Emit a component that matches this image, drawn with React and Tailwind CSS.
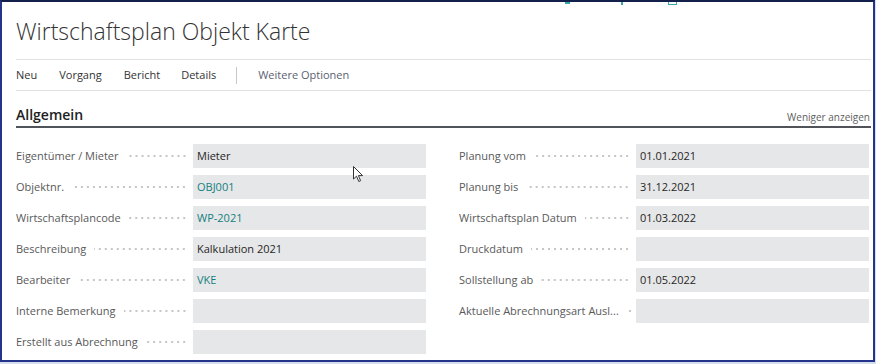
import React from 'react';

const leftFields = [
    { label: 'Eigentümer / Mieter', value: 'Mieter' },
    { label: 'Objektnr.', value: 'OBJ001', link: true },
    { label: 'Wirtschaftsplancode', value: 'WP-2021', link: true },
    { label: 'Beschreibung', value: 'Kalkulation 2021' },
    { label: 'Bearbeiter', value: 'VKE', link: true },
    { label: 'Interne Bemerkung', value: '' },
    { label: 'Erstellt aus Abrechnung', value: '' },
];

const rightFields = [
    { label: 'Planung vom', value: '01.01.2021' },
    { label: 'Planung bis', value: '31.12.2021' },
    { label: 'Wirtschaftsplan Datum', value: '01.03.2022' },
    { label: 'Druckdatum', value: '' },
    { label: 'Sollstellung ab', value: '01.05.2022' },
    { label: 'Aktuelle Abrechnungsart Ausl...', value: '' },
];

const Field = ({ label, value, link }) => (
    <div className="flex items-center h-[24px]">
        <div className="flex items-center w-[177px] pr-[6px] min-w-0">
            <span className="whitespace-nowrap text-[#595959]">{label}</span>
            <span className="flex-1 min-w-[6px] h-[4px] ml-[8px] bg-[radial-gradient(circle,#c4c4c4_0.7px,transparent_1px)] bg-[length:6px_4px] bg-repeat-x bg-right"></span>
        </div>
        <div
            className={`flex-1 h-full bg-[#e6e7e8] px-[4px] flex items-center ${link ? 'text-[#138080]' : 'text-[#262626]'}`}
        >
            {value}
        </div>
    </div>
);

const App = () => {
    return (
        <div className="w-[876px] h-[364px] bg-[#d5deef] font-['Open_Sans',sans-serif]">
            <div className="relative w-[875px] h-[362px] bg-white border-2 border-[#23348a] border-t-[#14204c] overflow-hidden">
                {/* cut-off toolbar icons on top */}
                <div className="absolute top-0 left-[563px] w-[5px] h-[2px] bg-[#3aa7a7]"></div>
                <div className="absolute top-0 left-[619px] w-[2px] h-[3px] bg-[#3aa7a7]"></div>
                <div className="absolute top-0 left-[666px] w-[9px] h-[3px] border-b border-x border-[#3aa7a7]"></div>

                <div className="pl-[14px] pr-[2px]">
                    <h1 className="pt-[13px] h-[57px] text-[23px] font-light text-[#333333] leading-[32px]">
                        Wirtschaftsplan Objekt Karte
                    </h1>

                    {/* Action bar */}
                    <div className="border-y border-[#e1e1e1] h-[32px] flex items-center text-[11px] text-[#333333] pt-px">
                        <span>Neu</span>
                        <span className="ml-[22px]">Vorgang</span>
                        <span className="ml-[22px]">Bericht</span>
                        <span className="ml-[21px]">Details</span>
                        <span className="ml-[20px] w-px h-[17px] bg-[#c8c8c8]"></span>
                        <span className="ml-[21px] text-[#5a6270]">Weitere Optionen</span>
                    </div>

                    {/* Section header */}
                    <div className="flex items-end justify-between h-[37px] border-b-2 border-[#505458] pb-[1px]">
                        <span className="text-[14px] font-semibold text-[#212121] leading-[20px]">Allgemein</span>
                        <span className="text-[10px] text-[#606060] leading-[16px] pr-px">Weniger anzeigen</span>
                    </div>

                    {/* Fields */}
                    <div className="grid grid-cols-2 gap-x-[33px] pt-[16px] pr-[2px] text-[11px]">
                        <div className="flex flex-col gap-[7px]">
                            {leftFields.map((f) => (
                                <Field key={f.label} {...f} />
                            ))}
                        </div>
                        <div className="flex flex-col gap-[7px]">
                            {rightFields.map((f) => (
                                <Field key={f.label} {...f} />
                            ))}
                        </div>
                    </div>
                </div>

                {/* Mouse cursor */}
                <svg className="absolute left-[351px] top-[164px]" width="11" height="17" viewBox="0 0 11 17">
                    <path d="M0.5 0.5 L0.5 13 L3.5 10.2 L5.8 15.5 L7.6 14.7 L5.4 9.6 L9.6 9.6 Z" fill="white" stroke="#333" strokeWidth="1" strokeLinejoin="round" />
                </svg>
            </div>
        </div>
    );
};

export default App;
